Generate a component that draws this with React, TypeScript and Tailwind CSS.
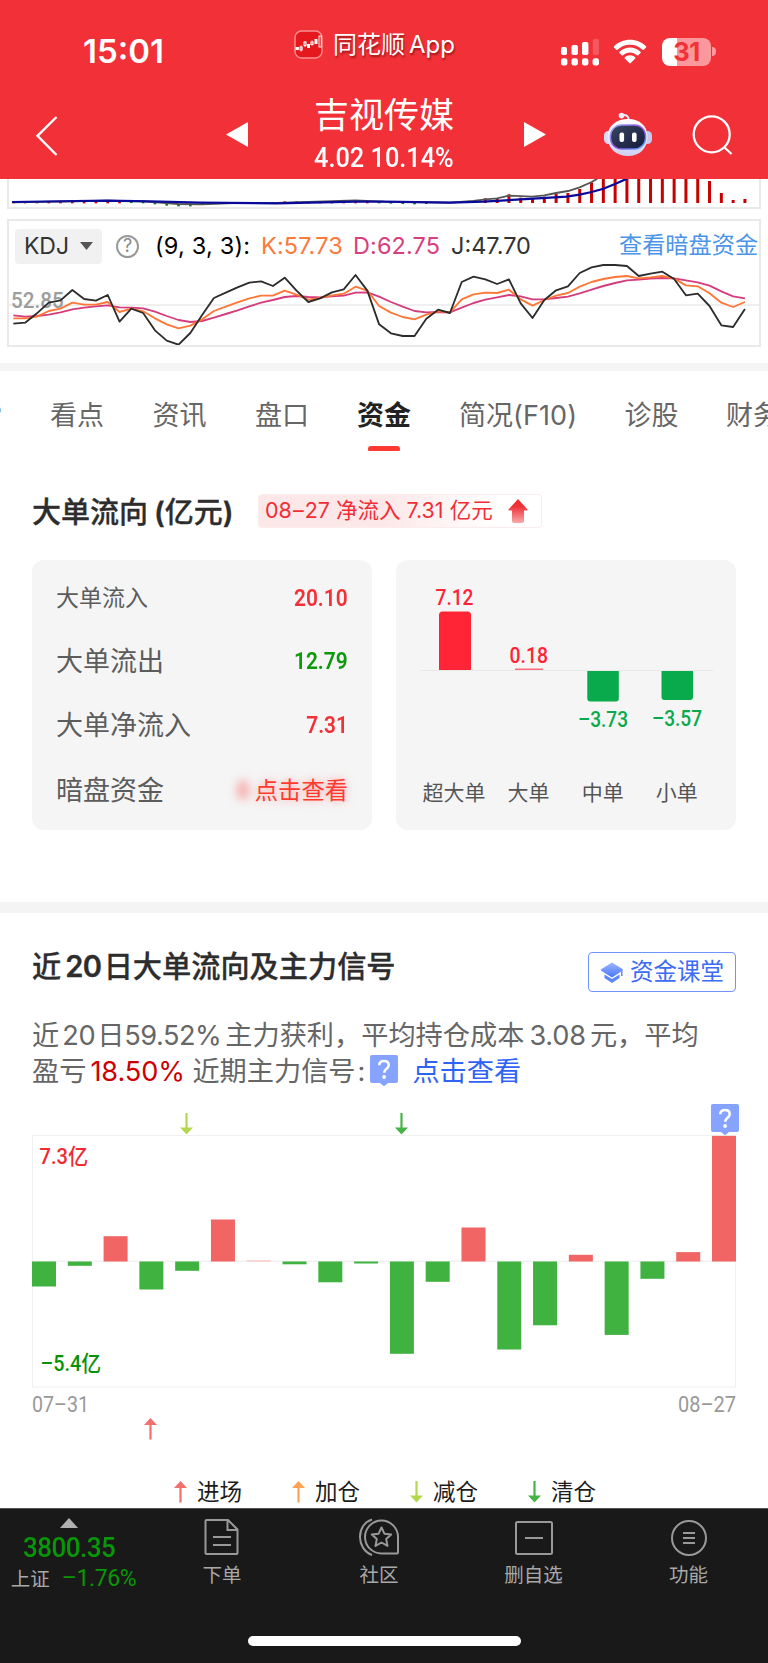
import React from "react";

const STEP = 35.4;

const J = [461, 458, 430, 398, 391, 360, 387, 392, 375, 455, 416, 429, 481, 512, 524, 489, 435, 384, 368, 352, 338, 334, 348, 323, 362, 396, 385, 367, 358, 315, 362, 463, 490, 498, 498, 446, 419, 429, 336, 320, 328, 342, 328, 400, 444, 390, 361, 349, 309, 292, 285, 285, 288, 318, 311, 305, 327, 376, 371, 408, 466, 471, 417];
const K = [445, 445, 440, 423, 416, 398, 404, 404, 396, 426, 416, 424, 445, 463, 475, 467, 448, 423, 410, 397, 385, 377, 377, 362, 374, 389, 384, 376, 371, 350, 362, 408, 428, 441, 448, 434, 424, 427, 388, 373, 368, 369, 359, 388, 407, 390, 377, 369, 350, 336, 327, 321, 318, 325, 322, 318, 326, 346, 349, 370, 398, 411, 396];
const D = [436, 440, 438, 434, 427, 418, 413, 409, 406, 412, 413, 415, 425, 438, 450, 456, 453, 443, 432, 421, 409, 398, 390, 381, 378, 381, 382, 379, 377, 368, 367, 380, 396, 410, 423, 427, 426, 427, 413, 399, 389, 382, 375, 379, 388, 388, 384, 380, 370, 359, 348, 339, 331, 329, 326, 324, 325, 331, 337, 347, 364, 379, 385];
const toPoints = (v: number[]) => v.map((y, i) => `${(40 + i * STEP).toFixed(1)},${y}`).join(" ");

// [index, top] pairs of the MACD histogram, base line at 99
const MACD: [number, number][] = [[40, 85], [41, 86], [42, 73], [43, 83], [44, 85], [45, 80], [46, 72], [47, 69], [48, 57], [49, 37], [50, 20], [51, 20], [52, 20], [53, 20], [54, 20], [55, 20], [56, 20], [57, 20], [58, 20], [59, 33], [60, 69], [61, 90], [62, 87]];
const MACD_DOTS_RED = [0, 1, 2, 3, 4, 5, 6, 7, 8, 9, 23, 24, 25, 26, 27, 28, 29, 30];
const MACD_DOTS_GREEN: [number, number][] = [[10, 97], [11, 98], [12, 101], [13, 105], [14, 107], [15, 107], [16, 103], [31, 98], [32, 99], [33, 100], [34, 101], [35, 100]];

// signed bar heights in px of the 20-day flow
const FLOW = [-25, -4.3, 25.3, -28, -9.3, 42, 1.2, -2.8, -20.8, -2, -92.3, -20.3, 34, -88, -63.8, 6.7, -73.4, -17.3, 9.4, 125.6];

function StatusBar() {
  return (
    <div className="flex h-[90px] items-center pt-[13px]">
      <div className="ml-[83px] w-[211px] text-[33px] font-semibold leading-none">15:01</div>
      <svg className="-mt-[14px] h-[29px] w-[29px]" viewBox="0 0 29 29">
        <rect x="1" y="1" width="27" height="27" rx="6.5" fill="#e5191d" stroke="#fb9094" strokeWidth="1.4" />
        <g fill="#fff">
          <rect x="1.5" y="17" width="3.4" height="3" />
          <rect x="13" y="14" width="3" height="4" />
          <rect x="20.5" y="9" width="3" height="5" />
        </g>
        <g fill="none" stroke="#fff" strokeWidth=".9">
          <rect x="6" y="17" width="2.2" height="3" /><path d="M7.1 15.5v6M11 11v6M18 10.5v5" />
          <rect x="9.9" y="12" width="2.2" height="3.4" /><rect x="16.9" y="12" width="2.2" height="2.6" />
          <rect x="25" y="6" width="2.2" height="11" />
        </g>
      </svg>
      <div className="-mt-[14px] ml-[10px] w-[228px] whitespace-nowrap text-[24px] leading-none [text-shadow:1px_2px_2px_rgba(90,0,0,0.55)]">
        同花顺<span className="ml-[4px]">App</span>
      </div>
      <svg className="h-[28px] w-[38px]" viewBox="0 0 38 28" fill="#fff">
        <rect x="0" y="9" width="6" height="8" rx="1.8" /><rect x="10.5" y="7" width="6.4" height="10" rx="1.8" />
        <rect x="21" y="4" width="6.4" height="13" rx="1.8" /><rect x="31.8" y="1" width="6.2" height="16" rx="1.8" opacity=".2" />
        <rect x="0" y="20.3" width="6.4" height="7.2" rx="2.2" /><rect x="10.5" y="20.3" width="6.4" height="7.2" rx="2.2" />
        <rect x="21" y="20.3" width="6.4" height="7.2" rx="2.2" /><rect x="31.6" y="20.3" width="6.4" height="7.2" rx="2.2" />
      </svg>
      <svg className="ml-[14px] h-[25px] w-[34px]" viewBox="0 0 34 25" fill="#fff">
        <path d="M17 .8C10.700.8 5 3.300 1 7.200c-.4.4-.4.9 0 1.300l2.200 2.200c.4.4.9.4 1.300 0C7.700 7.600 12.100 5.700 17 5.700s9.300 1.900 12.500 5c.4.4.9.4 1.300 0L33 8.500c.4-.4.4-.9 0-1.300C29 3.300 23.300.8 17 .8Z" />
        <path d="M17 8.600c-4.100 0-7.800 1.600-10.500 4.200-.4.4-.4.9 0 1.300l2.200 2.200c.4.4.9.4 1.300 0 1.800-1.700 4.300-2.800 7-2.800s5.200 1.100 7 2.800c.4.4.9.4 1.300 0l2.200-2.200c.4-.4.4-.9 0-1.300C24.800 10.200 21.100 8.600 17 8.600Z" />
        <path d="M17 16.300c-2 0-3.900.8-5.200 2-.4.4-.4.9 0 1.300l4.500 4.500c.4.4 1 .4 1.400 0l4.500-4.500c.4-.4.4-.9 0-1.300-1.300-1.200-3.200-2-5.200-2Z" />
      </svg>
      <div className="ml-[15px] flex h-[28px] w-[49px] items-center justify-center rounded-[8px] bg-[linear-gradient(90deg,#fff_31%,#fa989b_31%)] text-[25.500px] font-bold leading-none text-[#f23037]">
        <span className="tracking-[-0.5px]">31</span>
      </div>
      <div className="ml-[1px] h-[9px] w-[4px] rounded-r-full bg-[#fa989b]" />
    </div>
  );
}

function NavBar() {
  return (
    <div className="flex h-[89px] items-start">
      <svg className="ml-[34px] mt-[25px] h-[42px] w-[26px]" viewBox="0 0 26 42" fill="none" stroke="#fff" strokeWidth="2.400">
        <path d="M22.500 2 3.500 20.800l19 19.200" />
      </svg>
      <svg className="ml-[166px] mt-[32px] h-[25px] w-[22px]" viewBox="0 0 22 25"><path d="M22 0v25L0 12.500Z" fill="#fff" /></svg>
      <div className="ml-[46px] flex w-[180px] flex-col items-center">
        <div className="mt-[7px] h-[36px] text-[35px] leading-[36px]">吉视传媒</div>
        <div className="mt-[12px] scale-x-[0.92] whitespace-nowrap font-[Roboto] text-[27.500px] font-medium leading-[26px]">4.02 10.14%</div>
      </div>
      <svg className="ml-[50px] mt-[32px] h-[25px] w-[22px]" viewBox="0 0 22 25"><path d="M0 0v25l22-12.500Z" fill="#fff" /></svg>
      <svg className="ml-[58px] mt-[22px] h-[45px] w-[48px]" viewBox="0 0 48 45">
        <defs>
          <linearGradient id="head" x1="0" y1="0" x2="0" y2="1"><stop offset="0" stopColor="#fff" /><stop offset="1" stopColor="#cfd0f2" /></linearGradient>
          <linearGradient id="visor" x1="0" y1="0" x2="1" y2="1"><stop offset="0" stopColor="#3a4560" /><stop offset="1" stopColor="#141c3c" /></linearGradient>
          <linearGradient id="rim" x1="0" y1="0" x2="1" y2="1"><stop offset="0" stopColor="#8fb8ff" /><stop offset=".5" stopColor="#9a4be0" /><stop offset="1" stopColor="#4aa8ff" /></linearGradient>
        </defs>
        <path d="M17.500 3.500c4-1.500 7 0 7.500 5" fill="none" stroke="#efeaf8" strokeWidth="2" />
        <circle cx="17.500" cy="3.600" r="2.800" fill="#f4f0fb" />
        <rect x="0" y="19" width="9" height="13" rx="4.500" fill="#d9daf4" /><rect x="39" y="19" width="9" height="13" rx="4.500" fill="#c6c8ee" />
        <path d="M24 7c12 0 19.500 7 19.500 18S36 44 24 44 3.500 36 3.500 25 12 7 24 7Z" fill="url(#head)" />
        <rect x="6.500" y="13" width="35" height="24" rx="11" fill="url(#visor)" stroke="url(#rim)" strokeWidth="1.400" />
        <rect x="15.500" y="20.500" width="4.600" height="9.500" rx="2" fill="#fff" /><rect x="28" y="20.500" width="4.600" height="9.500" rx="2" fill="#fff" />
      </svg>
      <svg className="ml-[40px] mt-[24px] h-[42px] w-[42px]" viewBox="0 0 42 42" fill="none" stroke="#fff" strokeWidth="2.300">
        <circle cx="19.700" cy="20.300" r="18" /><path d="m32 33 7.500 7" />
      </svg>
    </div>
  );
}

function IndicatorCharts() {
  return (
    <div className="bg-white px-[7px]">
      <div className="h-[30px] border-x-2 border-b-2 border-[#e9e9e9]">
        <svg className="block h-[28px] w-[750px]" viewBox="27 27 2250 84">
          {MACD_DOTS_RED.map((i) => <rect key={i} x={36 + i * STEP} y="94" width="8" height="6" fill="#c00" />)}
          {MACD_DOTS_GREEN.map(([i, y]) => <rect key={i} x={36 + i * STEP} y={y - 4} width="8" height="6" fill="#0a7a1a" />)}
          {MACD.map(([i, y]) => <rect key={i} x={35.5 + i * STEP} y={y} width="9" height={99 - y} fill="#c80000" />)}
          <g fill="none" strokeWidth="5.500">
            <path stroke="#555" d="M40 97 322 92 430 94 535 102 606 103 700 99 830 99 1066 91 1152 95 1350 98 1420 93 1456 88 1491 85 1527 77 1597 80 1633 76 1668 69 1704 63 1739 52 1775 36 1792 26" />
            <path stroke="#0a0a9a" strokeWidth="6.500" d="M36 96 322 92 450 94 600 98 830 100 1066 95 1152 95 1350 98 1450 95 1550 89 1700 80 1739 74 1775 66 1810 56 1845 42 1881 26" />
          </g>
        </svg>
      </div>
      <div className="mt-[10px] border-2 border-[#e9e9e9]">
        <div className="flex h-[42px] items-center pt-[8px] text-[23.500px] leading-none">
          <div className="ml-[6px] flex h-[35px] w-[87px] items-center justify-center gap-[11px] rounded-[4px] bg-[#f1f1f1] text-[#333]">
            <span className="text-[23px]">KDJ</span>
            <svg className="h-[8px] w-[13px]" viewBox="0 0 13 8"><path d="M0 0h13L6.500 8Z" fill="#555" /></svg>
          </div>
          <div className="ml-[14px] flex h-[23px] w-[23px] items-center justify-center rounded-full border-2 border-[#999] text-[18px] text-[#888]">?</div>
          <span className="ml-[16px] w-[106px] whitespace-pre tracking-[0.2px] text-black">(9, 3, 3):</span>
          <span className="w-[92px] text-[#fb7a3c] tracking-[0.1px]">K:57.73</span>
          <span className="w-[98px] tracking-[0.1px] text-[#d73f7e]">D:62.75</span>
          <span className="w-[168px] text-[#333]">J:47.70</span>
          <span className="whitespace-nowrap text-[23.200px] text-[#4a94ea]">查看暗盘资金</span>
        </div>
        <svg className="block h-[82px] w-[750px]" viewBox="27 279 2250 246">
          <path d="M27 405H2277" stroke="#eaeaea" strokeWidth="4" />
          <text x="33" y="414" fontFamily="Roboto" fontSize="68" fontWeight="500" fill="#9c9c9c" textLength="158" lengthAdjust="spacingAndGlyphs">52.85</text>
          <g fill="none" strokeWidth="5.500" strokeLinejoin="round">
            <polyline points={toPoints(D)} stroke="#d63b7c" />
            <polyline points={toPoints(K)} stroke="#ff7636" />
            <polyline points={toPoints(J)} stroke="#2c2c2c" />
          </g>
        </svg>
      </div>
    </div>
  );
}

function Tabs() {
  return (
    <div className="flex h-[80px] items-start overflow-hidden whitespace-nowrap pt-[27px] text-[27px] leading-[36px] text-[#666]">
      <span className="-ml-[12px] w-[62px] shrink-0">?</span>
      <span className="w-[102.500px] shrink-0">看点</span>
      <span className="w-[102.500px] shrink-0">资讯</span>
      <span className="w-[102px] shrink-0">盘口</span>
      <span className="flex w-[102px] shrink-0 flex-col font-bold text-[#222]">
        资金
        <span className="ml-[11px] mt-[12px] h-[6px] w-[32px] rounded-[3px] bg-[#fd3a32]" />
      </span>
      <span className="w-[165.500px] shrink-0">简况<span className="tracking-[0.1px]">(F10)</span></span>
      <span className="w-[101.500px] shrink-0">诊股</span>
      <span className="shrink-0">财务</span>
    </div>
  );
}

function StatRow({ label, value, big, green }: { label: string; value: string; big?: boolean; green?: boolean }) {
  return (
    <div className="flex h-full items-center justify-between">
      <span className={big ? "text-[27px]" : "text-[23px]"}>{label}</span>
      <span className={"-mt-px origin-right scale-x-[0.87] font-[Roboto] text-[24px] font-semibold " + (green ? "text-[#0a9a0a]" : "text-[#f23037]")}>{value}</span>
    </div>
  );
}

function BigOrders() {
  return (
    <section className="h-[451px] shrink-0 bg-white px-8 pt-[43px]">
      <div className="flex h-[34px] items-center">
        <h2 className="w-[226px] whitespace-nowrap pt-[2px] text-[29px] font-medium leading-none text-[#2d2d2d] [-webkit-text-stroke:0.3px_#2d2d2d]">
          大单流向<span className="ml-[6px] font-semibold">(</span>亿元<span className="font-semibold">)</span>
        </h2>
        <div className="flex h-[34px] w-[284px] items-center rounded-[4px] border border-[#fdeced] bg-[linear-gradient(90deg,#fde8e9_45%,#fff_85%)] pl-[6px] text-[21.500px] leading-none text-[#ee2f36]">
          <span className="w-[243px] whitespace-nowrap">08<span className="mx-[1px]">–</span>27 净流入 7.31 亿元</span>
          <svg className="h-[25px] w-[20px]" viewBox="0 0 20 25">
            <defs><linearGradient id="up" x1="0" y1="0" x2="0" y2="1"><stop offset=".3" stopColor="#ee2f36" /><stop offset="1" stopColor="#f9a9ab" /></linearGradient></defs>
            <path d="M10 0 19.500 10.500q.5 1-.5 1H16V22q0 2-2 2H6q-2 0-2-2V11.500H1q-1 0-.5-1Z" fill="url(#up)" />
          </svg>
        </div>
      </div>
      <div className="mt-[32px] grid grid-cols-2 gap-6">
        <div className="h-[270px] rounded-[12px] bg-[#f5f5f5] px-[24px] pt-[7px] leading-none text-[#5c5c5c]">
          <div className="grid h-[256px] grid-rows-[62px_64px_65px_65px]">
            <StatRow label="大单流入" value="20.10" />
            <StatRow label="大单流出" value="12.79" big green />
            <StatRow label="大单净流入" value="7.31" big />
            <div className="flex items-center justify-between">
              <span className="text-[27px]">暗盘资金</span>
              <span className="flex items-center text-[23.300px] text-[#ff3b30]">
                <span className="mr-[6px] h-[20px] w-[12px] rounded-full bg-[#f76b66] opacity-50 blur-[5px]" />
                <span className="[text-shadow:0_0_9px_rgba(255,80,80,0.5)]">点击查看</span>
              </span>
            </div>
          </div>
        </div>
        <div className="h-[270px] rounded-[12px] bg-[#f5f5f5]">
          <svg className="block h-[270px] w-[340px]" viewBox="0 0 340 270">
            <path d="M24 110.500H317" stroke="#e9e9e9" />
            <path d="M43 110V55a3.500 3.500 0 0 1 3.500-3.500h25A3.500 3.500 0 0 1 75 55v55Z" fill="#ff2436" />
            <path d="M119 109.200h28" fill="none" stroke="#ff4856" strokeWidth="1.200" />
            <path d="M191.300 111v27.500q0 3 3 3h25.500q3 0 3-3V111Z" fill="#08aa4b" />
            <path d="M265.500 111v26q0 3 3 3H294q3 0 3-3v-26Z" fill="#08aa4b" />
            <g fontFamily="Roboto" fontSize="22" fontWeight="500">
              <text x="39.500" y="45.300" fill="#ff2436" textLength="38" lengthAdjust="spacingAndGlyphs">7.12</text>
              <text x="113.500" y="103.300" fill="#ff2436" textLength="38.500" lengthAdjust="spacingAndGlyphs">0.18</text>
              <text x="182" y="167" fill="#08aa4b" textLength="50" lengthAdjust="spacingAndGlyphs">–3.73</text>
              <text x="256" y="165.700" fill="#08aa4b" textLength="50" lengthAdjust="spacingAndGlyphs">–3.57</text>
            </g>
            <g fontFamily="Inter, 'Noto Sans CJK SC', sans-serif" fontSize="21" fill="#555" textAnchor="middle">
              <text x="58" y="240">超大单</text><text x="132.500" y="240">大单</text><text x="206.700" y="240">中单</text><text x="280.700" y="240">小单</text>
            </g>
          </svg>
        </div>
      </div>
    </section>
  );
}

function SignalBadge() {
  return (
    <svg className="block h-[31px] w-[28px]" viewBox="0 0 28 31">
      <path d="M2 0h24q2 0 2 2v24q0 2-2 2h-8l-4 3.300L10 28H2q-2 0-2-2V2Q0 0 2 0Z" fill="#85a3ff" />
      <path d="M9.300 10.300C9.300 7.500 11.200 6 14 6s4.700 1.600 4.700 4.200c0 3.700-4.500 3.600-4.500 7.600" fill="none" stroke="#fff" strokeWidth="2.500" />
      <circle cx="14.100" cy="22" r="1.900" fill="#fff" />
    </svg>
  );
}

function Arrow({ color, down }: { color: string; down?: boolean }) {
  return (
    <svg className={"block h-[21.500px] w-[13px] " + (down ? "rotate-180" : "")} viewBox="0 0 13 21.500">
      <path d="M6.500 0 13 7H7.600v14.500H5.400V7H0Z" fill={color} />
    </svg>
  );
}

function FlowChart() {
  return (
    <div className="relative mt-[13px] h-[338px]">
      <div className="flex h-[32px]">
        <div className="ml-[148px] mt-[9.500px]"><Arrow color="#b3d84c" down /></div>
        <div className="ml-[202px] mt-[9.500px]"><Arrow color="#45b444" down /></div>
        <div className="-mr-[2.500px] ml-auto mt-[1px]"><SignalBadge /></div>
      </div>
      <svg className="block h-[284px] w-[704px] overflow-visible" viewBox="0 0 704 284">
        <rect x=".5" y=".5" width="703" height="251.500" fill="none" stroke="#f0f0f0" />
        <path d="M0 126.300H704" stroke="#ececec" />
        {FLOW.map((v, i) => (
          <rect key={i} x={i * 35.79} y={v > 0 ? 126.500 - v : 126.500} width="24" height={Math.abs(v)} fill={i === 6 ? "#f9c4c4" : v > 0 ? "#f16565" : "#40b240"} />
        ))}
        <g fontFamily="Roboto, 'Noto Sans CJK SC', sans-serif" fontSize="22" fontWeight="500">
          <text x="7.500" y="29" fill="#ee2b31" textLength="48.500" lengthAdjust="spacingAndGlyphs">7.3亿</text>
          <text x="8.500" y="236" fill="#099109" textLength="60.500" lengthAdjust="spacingAndGlyphs">–5.4亿</text>
        </g>
        <g fontFamily="Roboto" fontSize="21.500" fill="#999">
          <text x="0" y="277" textLength="57" lengthAdjust="spacingAndGlyphs">07–31</text>
          <text x="646" y="277" textLength="58" lengthAdjust="spacingAndGlyphs">08–27</text>
        </g>
      </svg>
      <div className="-mt-[1px] ml-[112px]"><Arrow color="#f2706c" /></div>
    </div>
  );
}

const LEGEND = [
  { label: "进场", color: "#f2706c" },
  { label: "加仓", color: "#ffa352" },
  { label: "减仓", color: "#b3d84c", down: true },
  { label: "清仓", color: "#45b444", down: true },
];

function RecentFlow() {
  return (
    <section className="h-[595px] shrink-0 bg-white px-8 pt-[38px]">
      <div className="flex items-start justify-between">
        <h2 className="whitespace-nowrap pt-px text-[29.200px] font-medium leading-[30px] text-[#2d2d2d] [-webkit-text-stroke:0.3px_#2d2d2d]">
          近<span className="ml-[4px] mr-[2px] font-semibold tracking-[-0.5px]">20</span>日大单流向及主力信号
        </h2>
        <div className="mt-[1px] flex h-[40px] w-[148px] items-center gap-[7px] rounded-[4px] border-[1.500px] border-[#6f93fa] pl-[12px] text-[23.500px] leading-none text-[#3c6cf5]">
          <svg className="h-[21px] w-[22px] shrink-0" viewBox="0 0 22 21">
            <defs><linearGradient id="cap" x1="0" y1="0" x2="0" y2="1"><stop offset="0" stopColor="#9db6ff" /><stop offset="1" stopColor="#4676fa" /></linearGradient></defs>
            <path d="M11 .5 21.500 7q.8 1 0 2v5h-1.500V9.800L11 15.500.5 9q-.8-1 0-2Z" fill="url(#cap)" />
            <path d="M3.500 12.500 11 17l7.500-4.500V16L11 21l-7.500-5Z" fill="#5b85fb" />
          </svg>
          <span className="whitespace-nowrap">资金课堂</span>
        </div>
      </div>
      <div className="mt-[26px] whitespace-nowrap text-[27.200px] leading-[36px] text-[#666]">
        <div className="h-[36px]">
          近<span className="ml-[3px] mr-[2px] tracking-[-0.4px]">20</span>日<span className="mr-[4px] tracking-[-0.5px]">59.52%</span>主力获利，平均持仓成本<span className="ml-[5px] mr-[4px] tracking-[-0.2px]">3.08</span>元，平均
        </div>
        <div className="flex h-[36px] items-start">
          <span>盈亏</span>
          <span className="ml-[4px] w-[102px] tracking-[-0.1px] text-[#cc0000]">18.50%</span>
          <span className="w-[178px]">近期主力信号<span className="ml-[2px]">:</span></span>
          <div className="mt-px"><SignalBadge /></div>
          <span className="ml-[14px] text-[#2f63f6]">点击查看</span>
        </div>
      </div>
      <FlowChart />
      <div className="mt-[29px] flex pl-[142px]">
        {LEGEND.map((l) => (
          <div key={l.label} className="flex w-[118px] items-center text-[22.500px] leading-[44px] text-[#1c1c1c]">
            <Arrow color={l.color} down={l.down} />
            <span className="ml-[10px]">{l.label}</span>
          </div>
        ))}
      </div>
    </section>
  );
}

function NavItem({ label, width, children }: { label: string; width: string; children: React.ReactNode }) {
  return (
    <div className={"flex flex-col items-center pt-[9px] " + width}>
      <svg className="h-[38px] w-[42px]" viewBox="0 0 42 38" fill="none" stroke="#999" strokeWidth="2">{children}</svg>
      <span className="mt-[8px] whitespace-nowrap text-[19.500px] leading-[22px] text-[#a8a8a8]">{label}</span>
    </div>
  );
}

function BottomBar() {
  return (
    <footer className="h-[155px] shrink-0 border-t border-[#555] bg-[#191919]">
      <div className="flex h-[127px]">
        <div className="flex w-[144px] flex-col items-center pr-[6px] pt-[9px]">
          <svg className="h-[10px] w-[18px]" viewBox="0 0 18 10"><path d="M9 0 18 10H0Z" fill="#b0b0b0" /></svg>
          <div className="mt-[7px] scale-x-[0.96] font-[Roboto] text-[27px] font-medium leading-[26px] tracking-[-0.5px] text-[#079707]">3800.35</div>
          <div className="mt-[7px] flex items-center whitespace-nowrap pl-[9px] leading-[22px]">
            <span className="text-[19.500px] text-[#a8a8a8]">上证</span>
            <span className="ml-[12px] font-[Roboto] text-[23px] tracking-[-0.4px] text-[#079707]">–1.76%</span>
          </div>
        </div>
        <NavItem label="下单" width="w-[156px]">
          <path d="M27 2H5.500q-1 0-1 1V35q0 1 1 1h30q1 0 1-1V11.500Zm-.5.500v9.500H36M12 19h18M12 27h18" />
        </NavItem>
        <NavItem label="社区" width="w-[158px]">
          <path d="M14 1.500C-2 6.500-2 31 14 37" />
          <path d="M23.500 2.500a16.500 16.500 0 1 0 0 33H39q1 0 1-1V19A16.500 16.500 0 0 0 23.500 2.500Z" />
          <path d="m23.500 9.500 2.900 6.200 6.800.8-5 4.600 1.300 6.800-6-3.400-6 3.400 1.300-6.800-5-4.600 6.800-.8Z" strokeLinejoin="round" />
        </NavItem>
        <NavItem label="删自选" width="w-[151px]">
          <rect x="3" y="4" width="36" height="32" rx="1.500" /><path d="M12 20h18" />
        </NavItem>
        <NavItem label="功能" width="w-[159px]">
          <circle cx="21" cy="20" r="17" /><path d="M15 15h12M15 20h12M15 25h12" />
        </NavItem>
      </div>
      <div className="mx-auto h-[10px] w-[273px] rounded-full bg-white" />
    </footer>
  );
}

export default function App() {
  return (
    <div className="flex h-[1663px] w-[768px] flex-col overflow-hidden bg-white font-[Inter,'Noto_Sans_CJK_SC',sans-serif]">
      <header className="h-[179px] shrink-0 bg-[#f23037] text-white">
        <StatusBar />
        <NavBar />
      </header>
      <div className="h-[184px] shrink-0"><IndicatorCharts /></div>
      <div className="h-[8px] shrink-0 bg-[#f4f4f4]" />
      <div className="shrink-0"><Tabs /></div>
      <BigOrders />
      <div className="h-[11px] shrink-0 bg-[#f4f4f4]" />
      <RecentFlow />
      <BottomBar />
    </div>
  );
}
